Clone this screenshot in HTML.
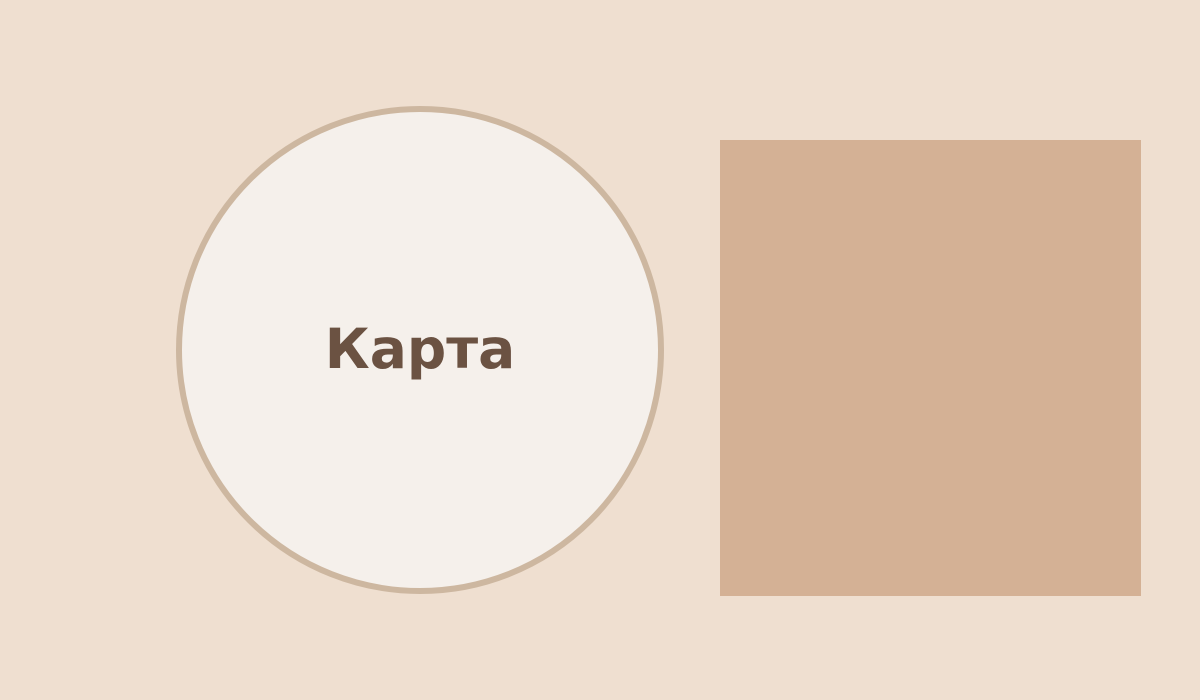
<!DOCTYPE html>
<html><head><meta charset="utf-8"><style>
html,body{margin:0;padding:0;width:1200px;height:700px;background:#efdfd0;overflow:hidden;position:relative}
.c{position:absolute;left:176px;top:106px;width:476px;height:476px;border:6px solid #cdb7a0;border-radius:50%;background:#f5f0eb;display:flex;align-items:center;justify-content:center}
.c span{font-family:"DejaVu Sans","Liberation Sans",sans-serif;font-weight:bold;font-size:55px;color:#6b5242;margin-top:-2px}
.r{position:absolute;left:720px;top:140px;width:421px;height:456px;background:#d4b195}
</style></head><body>
<div class="c"><span>Карта</span></div>
<div class="r"></div>
</body></html>
